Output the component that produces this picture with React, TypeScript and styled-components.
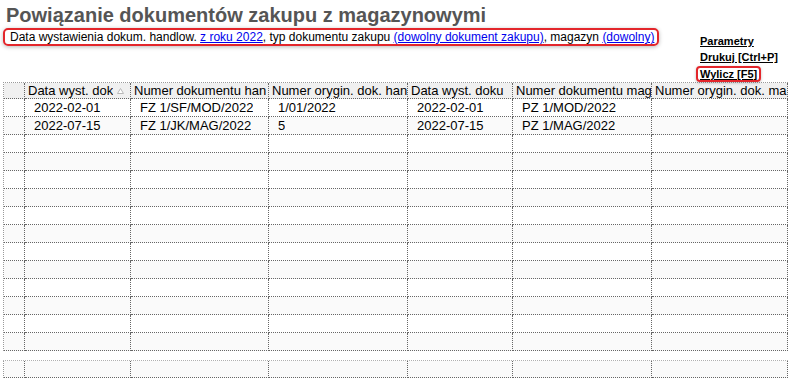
import React from "react";
import styled, { createGlobalStyle } from "styled-components";

const GlobalStyle = createGlobalStyle`
  html, body {
    margin: 0;
    padding: 0;
    background: #ffffff;
  }
  body {
    font-family: "Liberation Sans", Arial, sans-serif;
    color: #000;
  }
`;

const Page = styled.div`
  width: 792px;
  height: 381px;
  overflow: hidden;
  background: #fff;
`;

const Header = styled.div`
  display: flex;
  height: 82px;
`;

const HeaderMain = styled.div`
  flex: 1;
  display: flex;
  flex-direction: column;
  align-items: flex-start;
  padding-left: 3px;
  min-width: 0;
`;

const Title = styled.h1`
  margin: 3px 0 0 3px;
  font-family: "Liberation Sans", Arial, sans-serif;
  font-weight: 700;
  font-size: 20px;
  line-height: 24px;
  color: #555555;
  white-space: nowrap;
`;

const FilterBox = styled.div`
  margin-top: 1px;
  box-sizing: border-box;
  height: 18px;
  display: inline-flex;
  align-items: center;
  border: 2px solid #e3262b;
  border-radius: 5px;
  padding: 0 3px 0 5px;
  font-size: 12px;
  line-height: 14px;
  white-space: nowrap;
  box-shadow: 0 1px 4px rgba(0, 0, 0, 0.28);
`;

const FilterLink = styled.a`
  color: #0000ee;
  text-decoration: underline;
  cursor: pointer;
  white-space: pre;
`;

const Actions = styled.div`
  width: 96px;
  padding-top: 33px;
  box-sizing: border-box;
  display: flex;
  flex-direction: column;
  align-items: flex-start;
`;

const ActionLink = styled.a<{ $highlighted?: boolean }>`
  display: block;
  font-family: "Liberation Sans", Arial, sans-serif;
  font-weight: 700;
  font-size: 11px;
  color: #000;
  text-decoration: underline;
  cursor: pointer;
  white-space: nowrap;
  ${(p) =>
    p.$highlighted
      ? `
    box-sizing: border-box;
    height: 16px;
    margin-top: 1px;
    line-height: 12px;
    padding: 0 2px;
    border: 2px solid #e3262b;
    border-radius: 4px;
    box-shadow: 0 1px 3px rgba(0, 0, 0, 0.25);
  `
      : `
    line-height: 16px;
    padding-left: 4px;
  `}
`;

const COLUMNS = "21px 106px 138px 139px 105px 139px 136px";

const Table = styled.div`
  margin-left: 3px;
  width: 785px;
  box-sizing: border-box;
  border-left: 1px dotted #9a9a9a;
  border-top: 1px dotted #9a9a9a;
  font-size: 13px;
`;

const FooterTable = styled(Table)`
  margin-top: 9px;
  border-top-color: #b0b0b0;
`;

const Row = styled.div<{ $alt?: boolean; $height: number }>`
  display: grid;
  grid-template-columns: ${COLUMNS};
  height: ${(p) => p.$height}px;
  background: ${(p) => (p.$alt ? "#fafafa" : "#ffffff")};
`;

const HeadRow = styled(Row)`
  background: #f0f0f0;
`;

const Cell = styled.div<{ $head?: boolean }>`
  box-sizing: border-box;
  border-right: 1px dotted #666;
  border-bottom: 1px dotted #666;
  display: flex;
  align-items: center;
  overflow: hidden;
  white-space: nowrap;
  padding-left: ${(p) => (p.$head ? "3px" : "9px")};
  line-height: 15px;
`;

const CellText = styled.span`
  overflow: hidden;
  white-space: nowrap;
  flex: 0 1 auto;
  min-width: 0;
`;

const SortMark = styled.svg`
  flex: none;
  margin-left: 4px;
  margin-top: 1px;
`;

const headers = [
  "Data wyst. dok",
  "Numer dokumentu han",
  "Numer orygin. dok. han",
  "Data wyst. doku",
  "Numer dokumentu mag",
  "Numer orygin. dok. ma",
];

const data: string[][] = [
  ["2022-02-01", "FZ 1/SF/MOD/2022", "1/01/2022", "2022-02-01", "PZ 1/MOD/2022", ""],
  ["2022-07-15", "FZ 1/JK/MAG/2022", "5", "2022-07-15", "PZ 1/MAG/2022", ""],
];

const TOTAL_ROWS = 14;

export default function App() {
  const rows: string[][] = [];
  for (let i = 0; i < TOTAL_ROWS; i++) {
    rows.push(data[i] ?? ["", "", "", "", "", ""]);
  }

  return (
    <Page>
      <GlobalStyle />
      <Header>
        <HeaderMain>
          <Title>Powiązanie dokumentów zakupu z magazynowymi</Title>
          <FilterBox>
            Data wystawienia dokum. handlow.&nbsp;<FilterLink>z roku 2022</FilterLink>, typ dokumentu zakupu&nbsp;
            <FilterLink>(dowolny dokument zakupu)</FilterLink>, magazyn&nbsp;<FilterLink>(dowolny)</FilterLink>
          </FilterBox>
        </HeaderMain>
        <Actions>
          <ActionLink>Parametry</ActionLink>
          <ActionLink>Drukuj [Ctrl+P]</ActionLink>
          <ActionLink $highlighted>Wylicz [F5]</ActionLink>
        </Actions>
      </Header>

      <Table>
        <HeadRow $height={16}>
          <Cell $head />
          {headers.map((h, i) => (
            <Cell $head key={h}>
              <CellText>{h}</CellText>
              {i === 0 && (
                <SortMark width="7" height="6" viewBox="0 0 7 6">
                  <polygon points="0.5,5.5 3.5,0.5 6.5,5.5" fill="#ffffff" stroke="#b8b8b8" strokeWidth="1" />
                </SortMark>
              )}
            </Cell>
          ))}
        </HeadRow>
        {rows.map((r, ri) => (
          <Row key={ri} $height={18} $alt={ri % 2 === 1}>
            <Cell />
            {r.map((v, ci) => (
              <Cell key={ci}>
                <CellText>{v}</CellText>
              </Cell>
            ))}
          </Row>
        ))}
      </Table>

      <FooterTable>
        <Row $height={17} $alt>
          <Cell />
          {headers.map((h) => (
            <Cell key={h} />
          ))}
        </Row>
      </FooterTable>
    </Page>
  );
}
